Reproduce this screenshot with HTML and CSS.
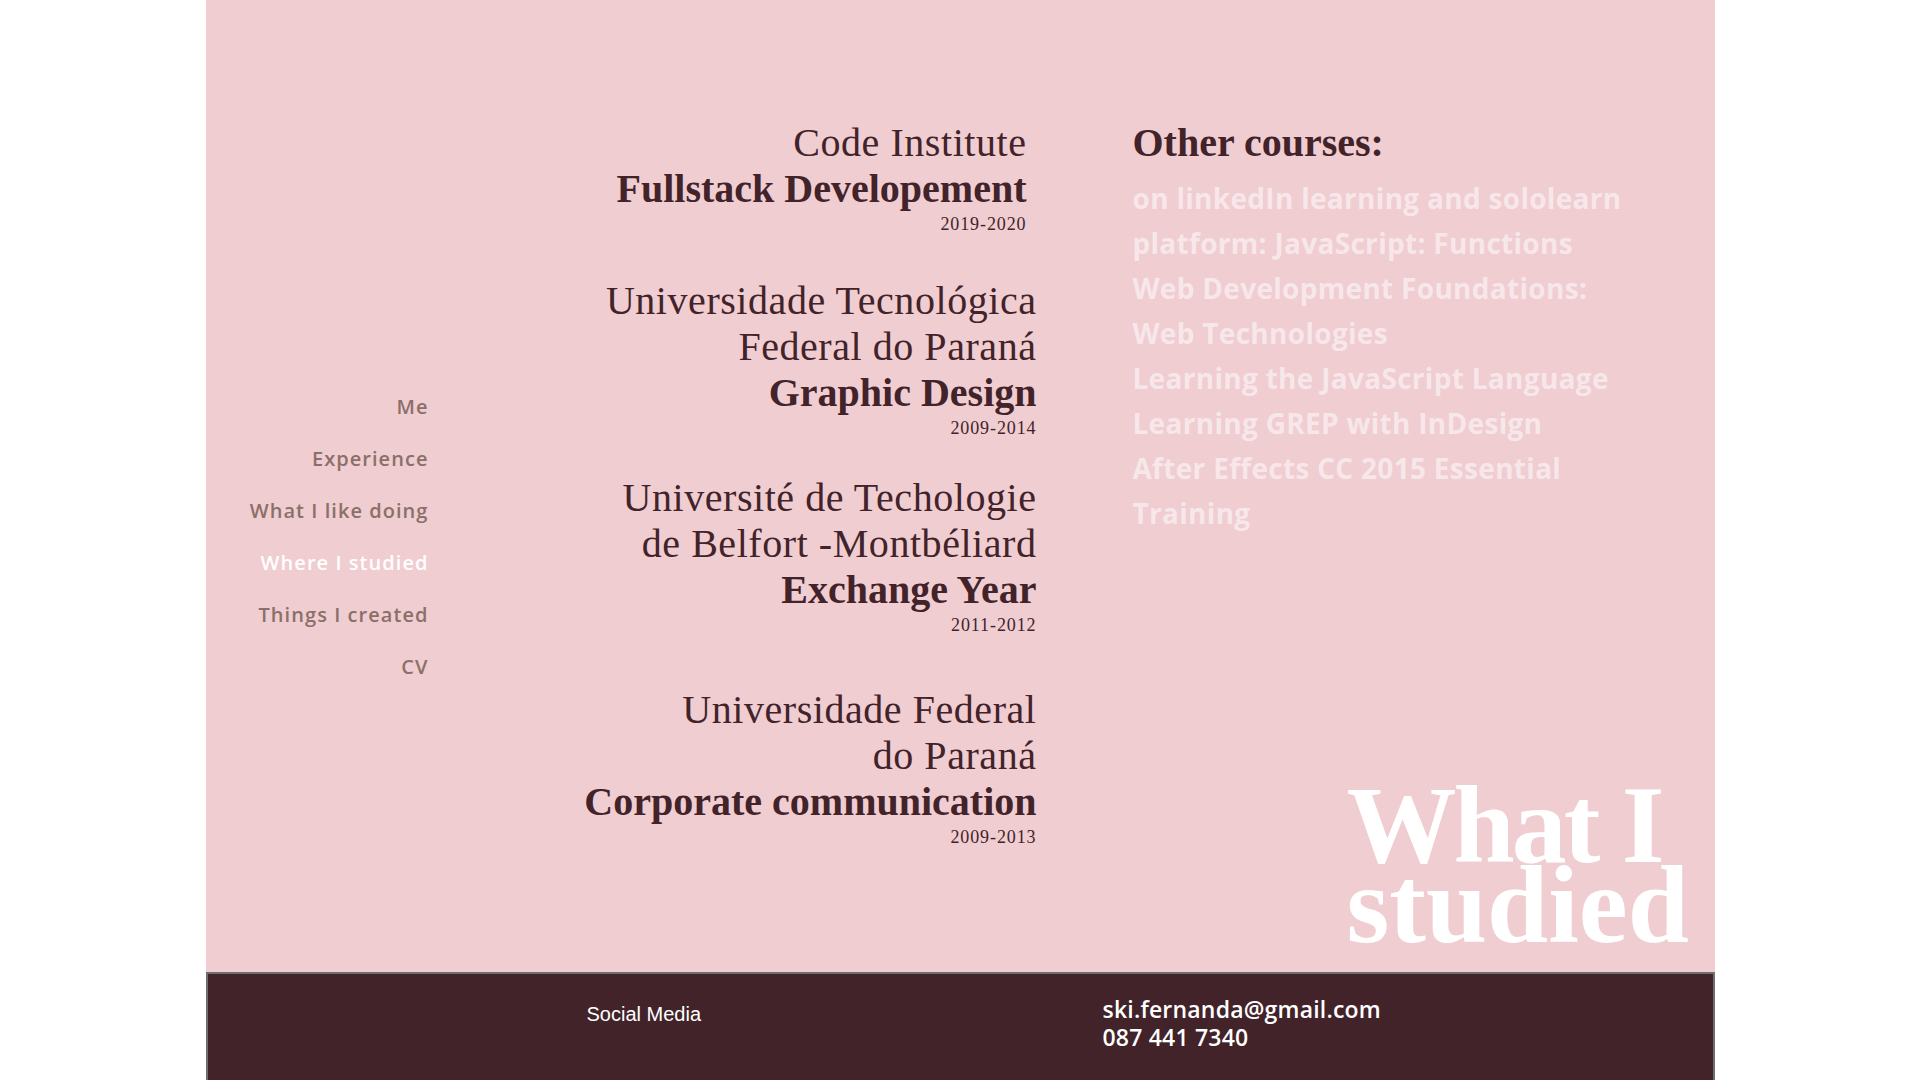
FILE: index.html
```html
<!DOCTYPE html>
<html lang="en">
<head>
<meta charset="utf-8">
<title>What I studied</title>
<link rel="stylesheet" href="styles.css">
</head>
<body>
<div class="page">
  <main class="main">
    <nav class="nav">
      <a class="nav-link" href="#">Me</a>
      <a class="nav-link" href="#">Experience</a>
      <a class="nav-link" href="#">What I like doing</a>
      <a class="nav-link active" href="#">Where I studied</a>
      <a class="nav-link" href="#">Things I created</a>
      <a class="nav-link" href="#">CV</a>
    </nav>
    <section class="edu">
      <div class="school school-1">
        <p class="inst">Code Institute</p>
        <p class="course">Fullstack Developement</p>
        <p class="years">2019-2020</p>
      </div>
      <div class="school school-2">
        <p class="inst">Universidade Tecnológica</p>
        <p class="inst">Federal do Paraná</p>
        <p class="course">Graphic Design</p>
        <p class="years">2009-2014</p>
      </div>
      <div class="school school-3">
        <p class="inst">Université de Techologie</p>
        <p class="inst">de Belfort -Montbéliard</p>
        <p class="course">Exchange Year</p>
        <p class="years">2011-2012</p>
      </div>
      <div class="school school-4">
        <p class="inst">Universidade Federal</p>
        <p class="inst">do Paraná</p>
        <p class="course">Corporate communication</p>
        <p class="years">2009-2013</p>
      </div>
    </section>
    <aside class="side">
      <h2 class="other-title">Other courses:</h2>
      <p class="other-list">on linkedIn learning and sololearn<br>platform: JavaScript: Functions<br>Web Development Foundations:<br>Web Technologies<br>Learning the JavaScript Language<br>Learning GREP with InDesign<br>After Effects CC 2015 Essential<br>Training</p>
      <h1 class="page-title"><span class="title-line">What I</span><span class="title-line">studied</span></h1>
    </aside>
  </main>
  <footer class="footer">
    <div class="social">Social Media</div>
    <div class="contact">
      <div>ski.fernanda@gmail.com</div>
      <div>087 441 7340</div>
    </div>
  </footer>
</div>
</body>
</html>
```
FILE: styles.css
```css
* { box-sizing: border-box; }
html, body { margin: 0; padding: 0; }
body { background: #ffffff; }

.page {
  width: 1509px;
  margin: 0 auto;
}

.main {
  height: 972px;
  background: #f0cdd1;
  display: grid;
  grid-template-columns: 223px 608px 1fr;
  color: #42232a;
}

/* nav */
.nav {
  display: flex;
  flex-direction: column;
  align-items: flex-end;
  padding-top: 381px;
}
.nav-link {
  font-family: "Open Sans", "Lato", sans-serif;
  font-weight: 600;
  font-size: 20px;
  line-height: 52px;
  letter-spacing: 1.05px;
  color: #8a7068;
  text-decoration: none;
}
.nav-link.active { color: #ffffff; }

/* education */
.edu {
  display: flex;
  flex-direction: column;
  align-items: flex-end;
  text-align: right;
  padding-top: 120px;
  font-family: "Liberation Serif", "Times New Roman", serif;
}
.school { display: flex; flex-direction: column; align-items: flex-end; }
.school p { margin: 0; }
.school-1 { margin-right: 10px; }
.school-2 { margin-top: 42px; }
.school-3 { margin-top: 35px; }
.school-4 { margin-top: 50px; }
.inst {
  font-size: 40px;
  line-height: 46px;
  font-weight: 400;
  letter-spacing: 0.55px;
}
.course {
  font-size: 40px;
  line-height: 46px;
  font-weight: 700;
}
.years {
  font-size: 18px;
  line-height: 24px;
  letter-spacing: 0.9px;
}

/* side column */
.side {
  display: flex;
  flex-direction: column;
  padding-left: 96px;
  padding-top: 120px;
}
.other-title {
  margin: 0;
  font-family: "Liberation Serif", "Times New Roman", serif;
  font-weight: 700;
  font-size: 40px;
  line-height: 46px;
}
.other-list {
  margin: 10px 0 0;
  font-family: "Open Sans", "Lato", sans-serif;
  font-weight: 700;
  font-size: 28px;
  line-height: 45px;
  letter-spacing: 0.3px;
  color: #f7e7ea;
  white-space: nowrap;
}
.page-title {
  margin: auto 0 27px 214px;
  font-family: "Liberation Serif", "Times New Roman", serif;
  font-weight: 700;
  font-size: 110px;
  line-height: 80px;
  color: #ffffff;
  white-space: nowrap;
}
.title-line { display: block; height: 80px; }
.title-line:first-child { letter-spacing: -3px; }

/* footer */
.footer {
  height: 108px;
  background: #412329;
  border: 2px solid #6f6f6f;
  border-bottom: none;
  display: grid;
  grid-template-columns: 379px 516px 1fr;
  color: #ffffff;
}
.social {
  grid-column: 2;
  padding-top: 28px;
  font-family: "Liberation Sans", Arial, sans-serif;
  font-size: 20px;
  line-height: 24px;
}
.contact {
  grid-column: 3;
  padding-top: 21px;
  font-family: "Open Sans", "Lato", sans-serif;
  font-weight: 600;
  font-size: 23px;
  line-height: 28px;
  letter-spacing: 0.2px;
}
```
